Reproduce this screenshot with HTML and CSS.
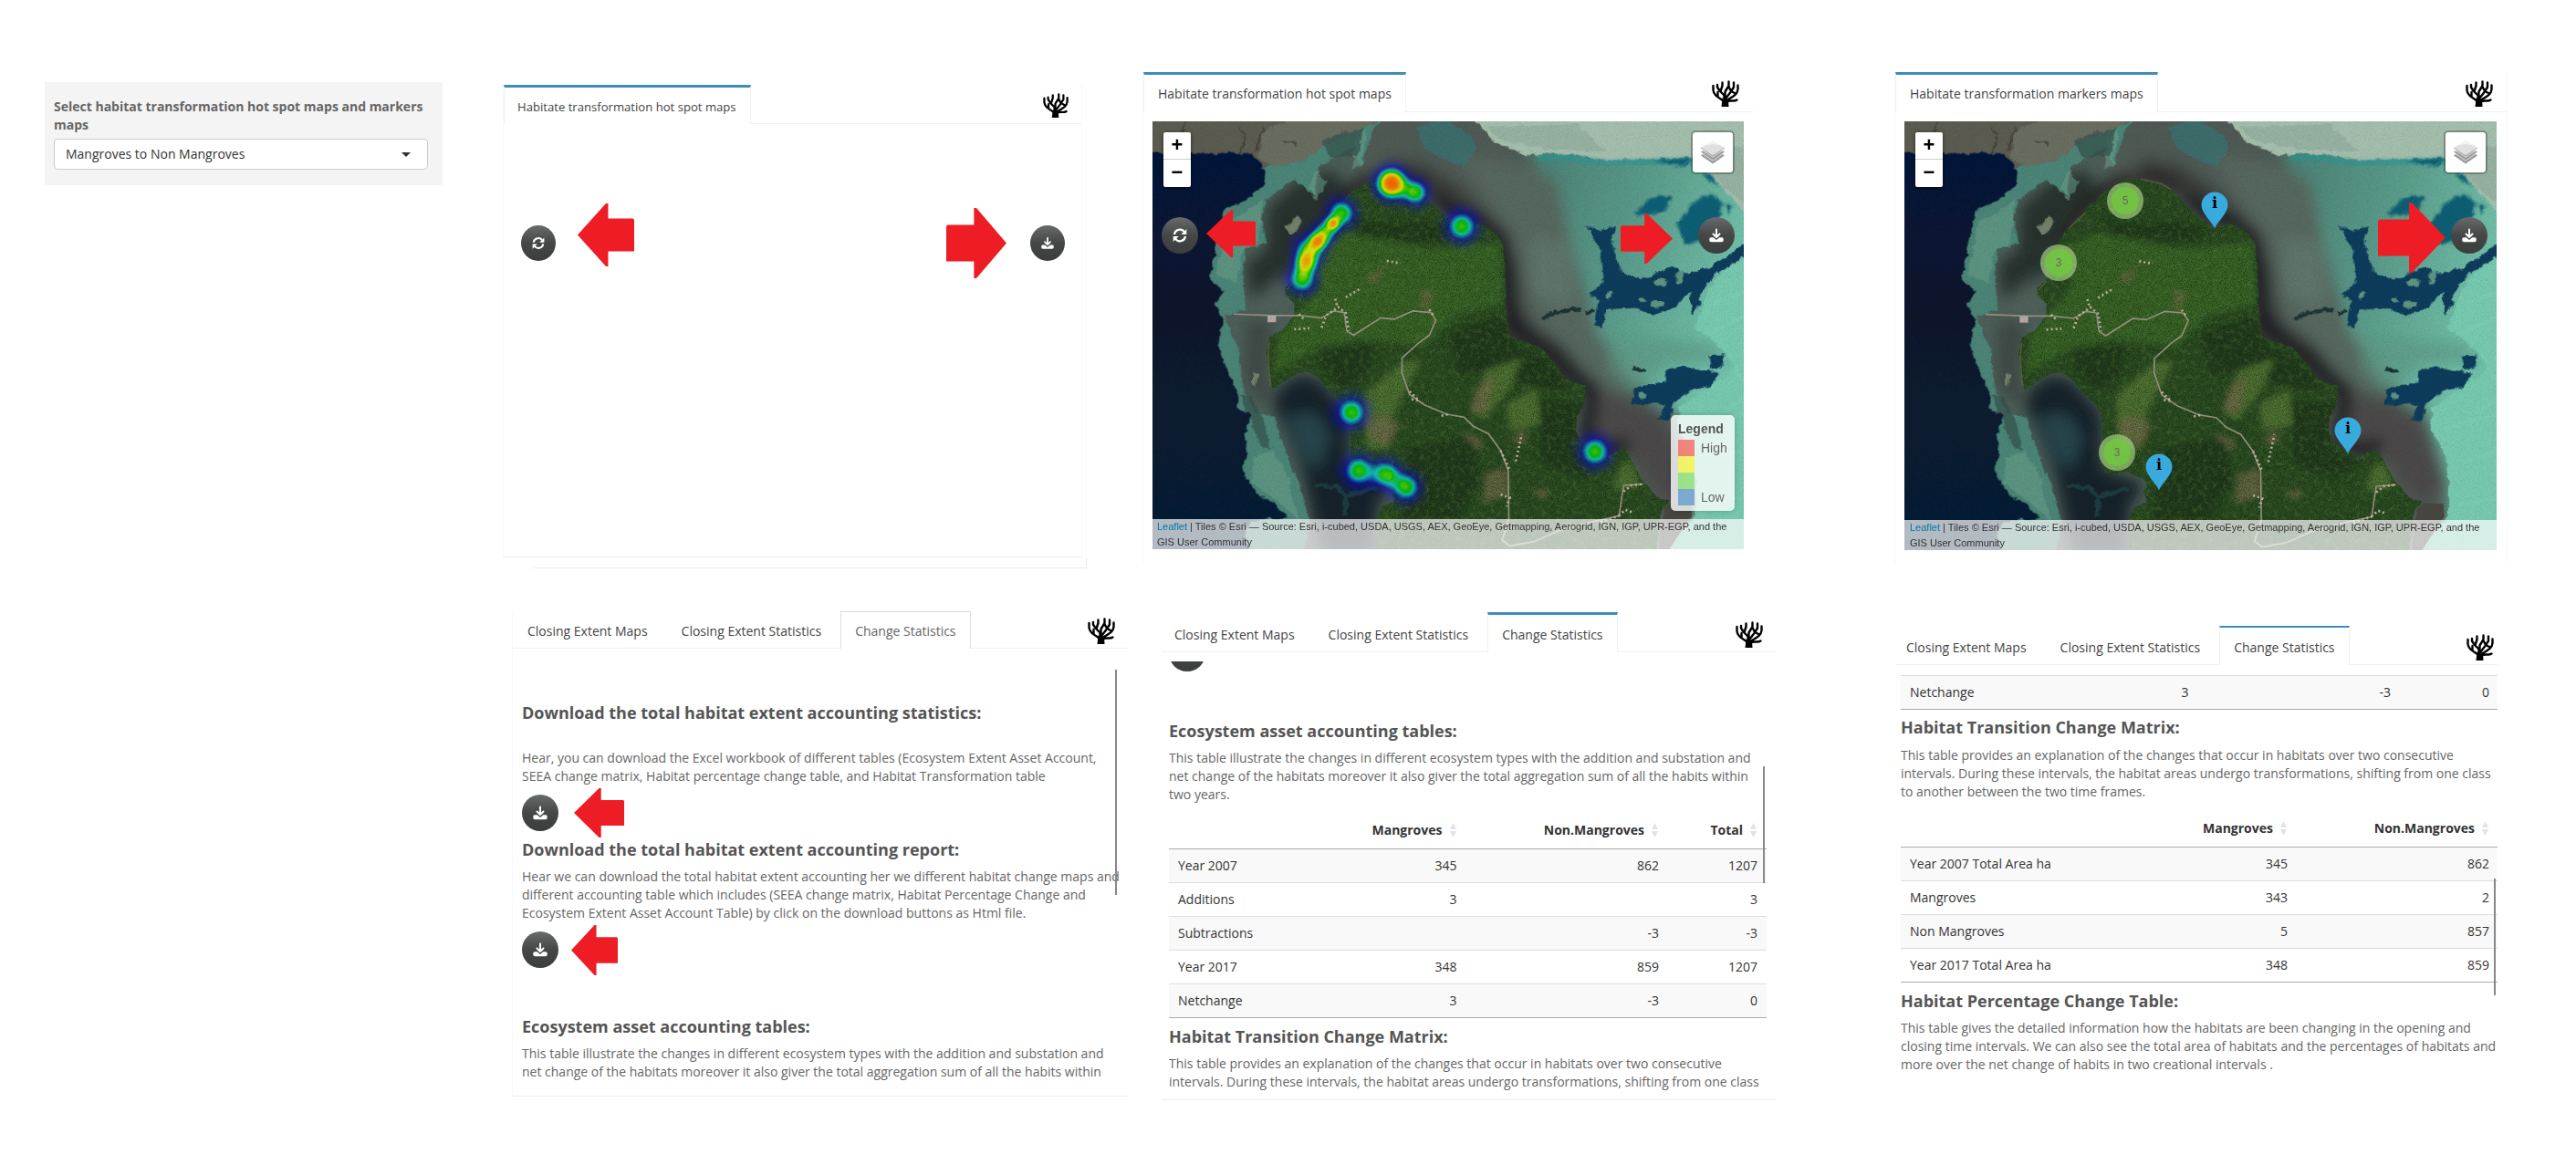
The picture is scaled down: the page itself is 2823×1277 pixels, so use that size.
FILE: index.html
```html
<!DOCTYPE html>
<html lang="en">
<head>
<meta charset="utf-8">
<title>Habitat extent accounting</title>
<link rel="stylesheet" href="styles.css">
</head>
<body>
<svg class="defs" width="0" height="0" aria-hidden="true">
  <defs>
    <filter id="rough" x="-5%" y="-5%" width="110%" height="110%">
      <feTurbulence type="fractalNoise" baseFrequency=".04" numOctaves="4" seed="4" result="n"/>
      <feDisplacementMap in="SourceGraphic" in2="n" scale="20" xChannelSelector="R" yChannelSelector="G"/>
      <feGaussianBlur stdDeviation=".7"/>
    </filter>
    <filter id="fray" x="-5%" y="-5%" width="110%" height="110%">
      <feTurbulence type="fractalNoise" baseFrequency=".04" numOctaves="4" seed="9" result="n"/>
      <feDisplacementMap in="SourceGraphic" in2="n" scale="10" xChannelSelector="R" yChannelSelector="G"/>
    </filter>
    <filter id="soft" x="-20%" y="-20%" width="140%" height="140%"><feGaussianBlur stdDeviation="9"/></filter>
    <filter id="softer" x="-20%" y="-20%" width="140%" height="140%"><feGaussianBlur stdDeviation="4"/></filter>
    <filter id="haze" x="-20%" y="-20%" width="140%" height="140%"><feGaussianBlur stdDeviation="24"/></filter>
    <filter id="grain" x="0" y="0" width="100%" height="100%" color-interpolation-filters="sRGB">
      <feTurbulence type="fractalNoise" baseFrequency=".35" numOctaves="4" seed="3"/>
      <feColorMatrix values="0 0 0 0 0  0 0 0 0 .02  0 0 0 0 0  2.4 0 0 0 -1.05"/>
    </filter>
    <filter id="patches" x="0" y="0" width="100%" height="100%" color-interpolation-filters="sRGB">
      <feTurbulence type="fractalNoise" baseFrequency=".06" numOctaves="5" seed="12"/>
      <feColorMatrix values="0 0 0 0 .34  0 0 0 0 .5  0 0 0 0 .22  0 3 0 0 -1.35"/>
    </filter>
    <filter id="heat" x="0" y="0" width="100%" height="100%" color-interpolation-filters="sRGB">
      <feColorMatrix values="0 0 0 1 0  0 0 0 1 0  0 0 0 1 0  0 0 0 1 0"/>
      <feComponentTransfer>
        <feFuncR type="table" tableValues="0 0 0 0 0 0 0 0 1 1 1"/>
        <feFuncG type="table" tableValues="0 0 0 0 0 .5 1 .9 1 .5 0"/>
        <feFuncB type="table" tableValues="1 1 1 1 1 1 1 0 0 0 0"/>
      </feComponentTransfer>
    </filter>
    <radialGradient id="pt">
      <stop offset="0" stop-opacity=".73"/><stop offset=".2" stop-opacity=".69"/>
      <stop offset=".4" stop-opacity=".5"/><stop offset=".6" stop-opacity=".26"/>
      <stop offset=".8" stop-opacity=".08"/><stop offset="1" stop-opacity="0"/>
    </radialGradient>
    <linearGradient id="lagoon" gradientUnits="userSpaceOnUse" x1="1240" y1="300" x2="1940" y2="500"><stop offset="0" stop-color="#4b8377"/><stop offset=".5" stop-color="#5b9c8b"/><stop offset="1" stop-color="#72c2ab"/></linearGradient>
    <linearGradient id="sea" x2="0" y2="1"><stop offset="0" stop-color="#06193a"/><stop offset=".4" stop-color="#08192c"/><stop offset="1" stop-color="#061c36"/></linearGradient>
    <path id="coast" d="M780 192L850 205 900 240 930 280 972 315 1022 350 1082 335 1122 360 1157 400 1164 480 1167 600 1177 705 1222 725 1282 745 1322 790 1347 830 1382 860 1432 870 1422 940 1402 970 1397 1020 1412 1050 1457 1090 1502 1105 1532 1082 1562 1080 1587 1130 1622 1190 1662 1235 1707 1250 1687 1275 1672 1310 1662 1420H740L745 1300 760 1270 800 1250 790 1225 800 1200 790 1175 740 1155 700 1165 665 1155 655 1120V1000L650 960 620 920 575 880 550 845 520 825 480 830 440 855 400 885 390 850 380 770 388 710 430 690 470 640 470 600 440 570 440 550 470 520 510 460 500 410 540 350 600 290 660 230 720 195Z"/>
    <clipPath id="land"><use href="#coast"/></clipPath>

    <symbol id="island" viewBox="3 0 1948 1410" preserveAspectRatio="none">
      <rect width="1960" height="1410" fill="#4e5f59"/>
      <g filter="url(#haze)">
        <path fill="#4f5a55" d="M690-20H1060L1230 110 1320 200 1400 400V600L1500 750 1620 930 1720 980 1790 1180 1780 1240 1700 1300 1660 1420H900L700 300Z"/>
        <path fill="url(#lagoon)" d="M1240 80L1350 60 1500 60 1780 60 2050 200V1480H1640L1800 1300 1800 1180 1730 960 1660 920 1560 820 1470 700 1430 560 1380 400 1310 250Z"/>
        <path fill="#56675f" d="M1250 150L1340 200 1380 400 1420 560 1470 700 1560 800 1540 900 1460 860 1380 760 1260 640 1200 400 1100 250 1000 100Z"/>
        <path fill="#64786f" opacity=".8" d="M1250 380L1370 400 1400 560 1360 620 1250 560Z"/>
        <path fill="#5c9884" opacity=".7" d="M1520 700L1860 730 1900 800 1700 800 1580 900 1500 800Z"/>
        <path fill="#4c4a48" d="M1440 880L1600 930 1700 990 1770 1200 1700 1260 1560 1080 1430 1060Z"/>
        <path fill="#383a39" d="M760 120L900 140 1020 220 1130 330 1210 600 1300 740 1420 830 1420 900 1150 800 1100 340 900 260Z"/>
        <path fill="none" stroke="#1f1d20" stroke-width="52" d="M930 250L1010 320 1090 330 1150 380 1180 500 1190 670 1330 760 1390 830 1450 880 1430 1050 1510 1090 1570 1060"/>
        <path fill="none" stroke="#241e1d" stroke-width="40" d="M500 420L600 285 700 195 800 180 900 220"/>
        <path fill="#16242a" d="M410 890L480 835 550 850 650 960V1140L790 1190 740 1280V1430H560L500 1160 450 1040 400 930Z"/>
        <path fill="#2c4d55" opacity=".8" d="M440 970L540 960 590 1040 550 1150 490 1100Z"/>
        <path fill="#3c4a45" d="M310 650L400 660 380 860 400 900 360 930 310 860Z"/>
        <path fill="#27332f" d="M380 290L480 200 600 160 640 220 540 320 470 500 430 560 330 590 310 470 380 420Z"/>
        <path fill="#56665f" opacity=".8" d="M400 530L450 500 430 580 360 620 330 600Z"/>
      </g>
      <g filter="url(#rough)">
        <path fill="#5b5c51" d="M-20-20H790L640 80 500 140 390 165 350 140 330 110H-20Z"/>
        <path fill="#777d6e" opacity=".55" d="M360 40L480-20H760L620 80 500 130 400 155 355 120Z"/>
        <path fill="none" stroke="#3b3a35" stroke-width="4" d="M110 0L85 90M290 20L310 60 285 110M370 20L340 100M430 60L480 75"/>
        <path fill="#4b8577" d="M330 160L500 130 600 60 770-10 730 30 690 150 670 80 600 120 550 150 540 250 470 190 380 260 360 320 380 400 310 420 300 500 310 620 240 640 290 760 300 880 340 960 400 970 430 1060 480 1180 520 1310 500 1430H280L180 500 200 300Z"/>
        <path fill="#6a9f8b" opacity=".55" d="M250 330L340 280 370 250 350 400 300 430 280 530 210 510 230 420ZM330 1110L400 1080 450 1170 490 1320 400 1240 330 1190ZM540 160L580 200 540 260 520 220ZM670 60L710 20 690 150 660 150Z"/>
        <path fill="#34504b" opacity=".7" d="M560 60L700 20 680 110 590 120ZM290 900L330 910 370 990 390 1080 360 1070 330 1000Z"/>
        <path fill="#77c9b0" d="M1970 420L1865 510 1815 600 1790 680 1860 730 1920 800 1890 840 1740 940 1730 1000 1780 1100 1795 1200 1790 1300 1690 1420H1970Z"/>
        <path fill="#a5bfae" d="M1050-20H1970V320L1880 215 1780 120 1500 128 1350 105 1240 110 1130 70Z"/>
        <path fill="#91ad9c" opacity=".7" d="M1100 20L1400 10 1500 100 1300 90 1150 60ZM1800 100L1960 80V280L1880 210Z"/>
        <path fill="#2d7b7b" opacity=".55" d="M870 20L960-10 1050 40 1070 90 1030 150 960 125 900 90Z"/>
      </g>
      <path filter="url(#softer)" fill="none" stroke="#2a9797" stroke-width="22" opacity=".6" d="M1270 120L1350 115 1500 140 1780 130"/>
      <path filter="url(#softer)" fill="none" stroke="#8ad8bf" stroke-width="10" opacity=".35" d="M1850 600L1960 560M1830 700L1960 640M1900 760L1970 900 1880 960M1780 1010L1960 960M1840 1120L1960 1080M1820 1260L1960 1240"/>
      <path filter="url(#rough)" fill="url(#sea)" d="M-40 105L330 105 375 165 370 210 310 260 240 290 225 350 210 430 190 520 240 560 210 600 235 650 220 740 250 820 285 900 280 950 330 960 305 1030 315 1090 300 1150 340 1220 400 1260 450 1305 330 1315 310 1350 320 1430H-40Z"/>
      <g filter="url(#rough)">
        <path fill="#0e5f75" filter="url(#softer)" d="M1587 310L1612 280 1672 240 1712 250 1690 300ZM1780 270L1842 235 1882 270 1872 310 1812 390 1760 410 1730 340ZM1650 130L1780 120 1750 150ZM1810 170L1850 180 1870 220ZM1890 270L1920 280 1900 305Z"/>
        <path fill="#0d3c5c" d="M1432 340L1472 360 1532 345 1517 380 1527 440 1552 500 1612 520 1712 480 1752 500 1772 500 1842 480 1965 395V440L1862 500 1812 560 1807 600 1782 640 1772 560 1732 610 1652 640 1592 615 1497 620 1487 680 1462 670 1472 590 1442 570 1487 530 1477 420ZM1582 930L1592 880 1692 855V820L1752 805 1872 830 1842 870 1772 890 1717 930 1712 985 1672 980 1692 930ZM1837 770L1892 768 1877 810 1847 820Z"/>
        <path fill="none" stroke="#1f3535" stroke-width="13" d="M1285 650L1330 628 1410 620M1430 630L1460 624M1590 815L1630 820"/>
        <path fill="none" stroke="#1d3b40" stroke-width="16" d="M540 1200L610 1205 640 1235 740 1205M640 1235V1300"/>
        <g fill="#609481"><ellipse cx="1507" cy="572" rx="11" ry="14"/><ellipse cx="1615" cy="587" rx="11" ry="9"/><ellipse cx="1677" cy="530" rx="23" ry="14"/><ellipse cx="1667" cy="602" rx="25" ry="13"/><ellipse cx="1740" cy="512" rx="13" ry="20"/><ellipse cx="1615" cy="904" rx="12" ry="13"/></g>
        <path fill="#73806a" d="M440 350L480 310 495 330 480 365 450 370ZM335 825L352 830 345 870 335 865Z"/>
      </g>
      <g filter="url(#fray)"><use href="#coast" fill="#2a4b21"/></g>
      <g clip-path="url(#land)">
        <g filter="url(#soft)">
          <path fill="#376325" d="M480 430L640 370 760 390 900 420 1150 400 1160 600 1000 640 900 740 700 720 560 740 400 830 420 700 560 540Z"/>
          <path fill="#203a1b" d="M560 760L700 730 740 760 700 850 640 890 560 820ZM980 700L1150 640 1200 740 1300 780 1380 880 1300 880 1100 830 1010 830ZM640 300L720 340 900 330 1000 350 960 400 700 380ZM840 1080L1060 1040 1080 1180 1020 1300 820 1330ZM1280 920L1420 930 1400 1080 1500 1120 1420 1180 1280 1120Z"/>
          <path fill="#4e6f33" d="M700 900L830 790 890 790 800 960 780 1080 710 1080 700 980ZM1100 820L1220 780 1180 880 1100 980 1050 960ZM1170 930L1270 880 1280 1000 1180 1020ZM1540 1140L1580 1120 1610 1200 1520 1220Z"/>
          <path fill="#746b4b" opacity=".75" d="M700 980L770 970 820 1000 780 1070 720 1040ZM1070 880L1130 840 1100 960 1050 950ZM890 560L930 560 900 640ZM700 520L770 480 740 530ZM1100 1160L1170 1140 1180 1230 1090 1260ZM1180 1060L1220 1010 1240 1060ZM1250 1220L1310 1210 1300 1250ZM1020 1020L1090 1050 1080 1090Z"/>
        </g>
        <rect width="1960" height="1410" filter="url(#patches)" opacity=".35"/>
        <rect width="1960" height="1410" filter="url(#grain)" opacity=".38"/>
      </g>
      <path fill="none" stroke="#72664f" stroke-width="4" opacity=".7" d="M780 190L850 205 880 225M545 350L600 300M388 730L384 780 392 870M445 555L470 525"/>
      <path fill="none" stroke="#96917f" stroke-width="5" stroke-linejoin="round" d="M270 635L400 640 490 640 560 648 600 625 635 630 643 690 665 705 755 648 800 652 860 625 920 630 937 655 915 705 880 730 825 780V830L850 900 900 935 972 965 1030 975 1060 1005 1110 1030 1150 1085 1175 1150 1177 1310 1155 1380 1180 1400 1260 1385 1340 1350 1450 1320 1540 1300 1555 1200 1620 1195"/>
      <path fill="none" stroke="#bcb2a0" stroke-width="8" stroke-dasharray="6 9" d="M560 680L575 640 615 612 640 632 650 690M605 585L612 612M640 580L690 550M775 460L820 468M485 635L500 650M470 685L520 682M915 620L932 645M850 890L880 920 850 915M955 970L980 965M1150 1085L1180 1150M1150 1230L1180 1240 1170 1270M1200 1120L1220 1030M1555 1220L1580 1200 1620 1195M1540 1300L1560 1280 1590 1290M1480 1320L1540 1300"/>
      <path fill="#b6aaa2" d="M382 640h28v22h-28z"/>
      <path fill="#494743" d="M1690 1275L1710 1255 1775 1258 1780 1300 1750 1340 1700 1420H1670Z"/>
      <rect width="1960" height="1410" filter="url(#grain)" opacity=".1"/>
    </symbol>

    <symbol id="coral" viewBox="0 0 30 29">
      <g fill="none" stroke="#000" stroke-linecap="round" stroke-linejoin="round" stroke-width="2.400">
        <path d="M1.500 6V11C2 16 6 18 12.500 22.500M6.500 13V18M6 5V7.500L8.500 11.500 13.500 16.500V23M11.500 2.500V6L9.500 12M18.500 1.500V6L14.500 12.500 14.500 22M24 2.500V7.500L20.500 13 15.500 19.500M20.500 11L18.500 7M28.500 5.500V10C28 15 25 17 17 21.500M26 14.500L23 13M27.500 21.500C24 24 21 21 16 23.500"/>
      </g>
      <path d="M11.500 19.500L15 20.500 18 20.500 18.500 29H10.500Z"/>
    </symbol>
    <symbol id="sync" viewBox="0 0 16 16">
      <path fill="none" stroke="#fff" stroke-width="2.300" d="M2 7A6 6 0 0 1 13 4.500M14 9A6 6 0 0 1 3 11.500"/>
      <path fill="#fff" d="M15.300 1V7H9.300ZM.7 15V9H6.700Z"/>
    </symbol>
    <symbol id="down" viewBox="0 0 16 16">
      <path fill="none" stroke="#fff" stroke-width="2" stroke-linecap="round" stroke-linejoin="round" d="M8 1.500V9M4.500 6.500L8 10 11.500 6.500"/>
      <path fill="#fff" d="M2 10.300H4.800L8 13 11.200 10.300H14A1.700 1.700 0 0 1 15.700 12V13.500A1.700 1.700 0 0 1 14 15.200H2A1.700 1.700 0 0 1 .3 13.500V12A1.700 1.700 0 0 1 2 10.300Z"/>
    </symbol>
    <symbol id="stack" viewBox="0 0 26 26">
      <path fill="#9b9b9b" d="M0 16.500L13 25.500 26 16.500 24 15 13 22.500 2 15Z"/><path fill="#c9c9c9" d="M3 15.500L13 9 23 15.500 13 22.300Z"/>
      <path fill="#9b9b9b" d="M0 12.500L13 21.500 26 12.500 24 11.200 13 18.800 2 11.200Z"/><path fill="#d5d5d5" d="M3 11.800L13 5 23 11.800 13 18.700Z"/>
      <path fill="#8f8f8f" d="M0 8.600L13 17.400 26 8.600V7.700H0Z"/><path fill="#e0e0e0" d="M0 8L13 .3 26 8 13 16.500Z"/><path fill="#f3f3f3" d="M4 5.700L13 .3 22 5.700 13 3.800Z"/>
    </symbol>
    <symbol id="sort" viewBox="0 0 7 16"><path fill="#e3e3e3" d="M3.500 0L7 7H0ZM0 9H7L3.500 16Z"/></symbol>
    <symbol id="pin" viewBox="0 0 30 41">
      <path fill="#38aadd" d="M15 40.500C13 34 .5 24 .5 15A14.500 14.500 0 0 1 29.500 15C29.500 24 17 34 15 40.500Z"/>
    </symbol>
    <symbol id="arrow" viewBox="0 0 100 100" preserveAspectRatio="none"><path fill="#ee1c25" d="M0 50L50 0H54V24H98L100 26V76H54V100H50Z"/></symbol>
  </defs>
</svg>

<main class="board">
  <form class="filter">
    <label class="filter-label">Select habitat transformation hot spot maps and markers maps</label>
    <div class="select"><span>Mangroves to Non Mangroves</span><i class="caret"></i></div>
  </form>

  <section class="card blank">
    <header class="tabs"><span class="tab active">Habitate transformation hot spot maps</span><svg class="coral"><use href="#coral"/></svg></header>
    <div class="blank-body">
      <button class="round"><svg><use href="#sync"/></svg></button>
      <button class="round"><svg><use href="#down"/></svg></button>
    </div>
    <div class="outer-edge"></div>
    <svg class="arrow a1"><use href="#arrow"/></svg>
    <svg class="arrow right a2"><use href="#arrow"/></svg>
  </section>

  <section class="card map-card hot">
    <header class="tabs"><span class="tab active">Habitate transformation hot spot maps</span><svg class="coral"><use href="#coral"/></svg></header>
    <div class="map">
      <svg class="layer"><use href="#island"/></svg>
      <svg class="layer" viewBox="0 0 648 469" preserveAspectRatio="none">
        <g filter="url(#heat)" fill="url(#pt)">
          <rect width="648" height="469" fill="none"/>
          <circle cx="262" cy="68" r="31"/><circle cx="262" cy="68" r="27"/><circle cx="288" cy="78" r="26"/>
          <circle cx="339" cy="115" r="30"/>
          <circle cx="207" cy="101" r="28"/><circle cx="198" cy="112" r="14"/><circle cx="189" cy="122" r="23"/><circle cx="181" cy="132" r="17"/><circle cx="172" cy="141" r="29"/><circle cx="168" cy="155" r="22"/><circle cx="164" cy="173" r="28"/>
          <circle cx="218" cy="319" r="30"/><circle cx="485" cy="362" r="30"/>
          <circle cx="226" cy="383" r="30"/><circle cx="256" cy="387" r="28"/><circle cx="278" cy="401" r="28"/>
        </g>
      </svg>
      <div class="zoomer"><b>+</b><b>−</b></div>
      <div class="layers"><svg><use href="#stack"/></svg></div>
      <button class="round on-map at-left"><svg><use href="#sync"/></svg></button>
      <button class="round on-map at-right"><svg><use href="#down"/></svg></button>
      <div class="legend">
        <strong>Legend</strong>
        <div class="legend-body">
          <div class="swatches"><i class="s1"></i><i class="s2"></i><i class="s3"></i><i class="s4"></i></div>
          <div class="legend-text"><span>High</span><span>Low</span></div>
        </div>
      </div>
      <p class="credits"><a>Leaflet</a> | Tiles © Esri — Source: Esri, i-cubed, USDA, USGS, AEX, GeoEye, Getmapping, Aerogrid, IGN, IGP, UPR-EGP, and the<br>GIS User Community</p>
    </div>
    <svg class="arrow a3"><use href="#arrow"/></svg>
    <svg class="arrow right a4"><use href="#arrow"/></svg>
  </section>

  <section class="card map-card marks">
    <header class="tabs"><span class="tab active">Habitate transformation markers maps</span><svg class="coral"><use href="#coral"/></svg></header>
    <div class="map">
      <svg class="layer"><use href="#island"/></svg>
      <div class="zoomer"><b>+</b><b>−</b></div>
      <div class="layers"><svg><use href="#stack"/></svg></div>
      <button class="round on-map at-right"><svg><use href="#down"/></svg></button>
      <div class="cluster c1"><span>5</span></div>
      <div class="cluster c2"><span>3</span></div>
      <div class="cluster c3"><span>3</span></div>
      <div class="pin p1"><svg><use href="#pin"/></svg><span>i</span></div>
      <div class="pin p2"><svg><use href="#pin"/></svg><span>i</span></div>
      <div class="pin p3"><svg><use href="#pin"/></svg><span>i</span></div>
      <p class="credits"><a>Leaflet</a> | Tiles © Esri — Source: Esri, i-cubed, USDA, USGS, AEX, GeoEye, Getmapping, Aerogrid, IGN, IGP, UPR-EGP, and the<br>GIS User Community</p>
    </div>
    <svg class="arrow right a5"><use href="#arrow"/></svg>
  </section>

  <section class="card stats downloads">
    <header class="tabs"><span class="tab">Closing Extent Maps</span><span class="tab">Closing Extent Statistics</span><span class="tab active">Change Statistics</span><svg class="coral"><use href="#coral"/></svg></header>
    <div class="body">
      <h4>Download the total habitat extent accounting statistics:</h4>
      <p class="lead">Hear, you can download the Excel workbook of different tables (Ecosystem Extent Asset Account,<br>SEEA change matrix, Habitat percentage change table, and Habitat Transformation table</p>
      <button class="round"><svg><use href="#down"/></svg></button>
      <h4>Download the total habitat extent accounting report:</h4>
      <p>Hear we can download the total habitat extent accounting her we different habitat change maps and<br>different accounting table which includes (SEEA change matrix, Habitat Percentage Change and<br>Ecosystem Extent Asset Account Table) by click on the download buttons as Html file.</p>
      <button class="round"><svg><use href="#down"/></svg></button>
      <h4 class="spaced">Ecosystem asset accounting tables:</h4>
      <p>This table illustrate the changes in different ecosystem types with the addition and substation and<br>net change of the habitats moreover it also giver the total aggregation sum of all the habits within</p>
    </div>
    <i class="scroll"></i>
    <svg class="arrow a6"><use href="#arrow"/></svg>
    <svg class="arrow a7"><use href="#arrow"/></svg>
  </section>

  <section class="card stats assets">
    <header class="tabs"><span class="tab">Closing Extent Maps</span><span class="tab">Closing Extent Statistics</span><span class="tab active">Change Statistics</span><svg class="coral"><use href="#coral"/></svg></header>
    <div class="body">
      <button class="round"></button>
      <h4 class="spaced">Ecosystem asset accounting tables:</h4>
      <p>This table illustrate the changes in different ecosystem types with the addition and substation and<br>net change of the habitats moreover it also giver the total aggregation sum of all the habits within<br>two years.</p>
      <table>
        <colgroup><col class="w1"><col class="w2"><col class="w3"><col class="w4"></colgroup>
        <thead><tr><th></th><th>Mangroves<svg><use href="#sort"/></svg></th><th>Non.Mangroves<svg><use href="#sort"/></svg></th><th>Total<svg><use href="#sort"/></svg></th></tr></thead>
        <tbody>
          <tr><td>Year 2007</td><td>345</td><td>862</td><td>1207</td></tr>
          <tr><td>Additions</td><td>3</td><td></td><td>3</td></tr>
          <tr><td>Subtractions</td><td></td><td>-3</td><td>-3</td></tr>
          <tr><td>Year 2017</td><td>348</td><td>859</td><td>1207</td></tr>
          <tr><td>Netchange</td><td>3</td><td>-3</td><td>0</td></tr>
        </tbody>
      </table>
      <h4>Habitat Transition Change Matrix:</h4>
      <p>This table provides an explanation of the changes that occur in habitats over two consecutive<br>intervals. During these intervals, the habitat areas undergo transformations, shifting from one class</p>
    </div>
    <i class="scroll"></i>
  </section>

  <section class="card stats matrix">
    <header class="tabs"><span class="tab">Closing Extent Maps</span><span class="tab">Closing Extent Statistics</span><span class="tab active">Change Statistics</span><svg class="coral"><use href="#coral"/></svg></header>
    <div class="body">
      <table class="tail">
        <colgroup><col class="w1"><col class="w2"><col class="w3"><col class="w4"></colgroup>
        <tbody><tr><td>Netchange</td><td>3</td><td>-3</td><td>0</td></tr></tbody>
      </table>
      <h4>Habitat Transition Change Matrix:</h4>
      <p>This table provides an explanation of the changes that occur in habitats over two consecutive<br>intervals. During these intervals, the habitat areas undergo transformations, shifting from one class<br>to another between the two time frames.</p>
      <table>
        <colgroup><col class="v1"><col class="v2"><col class="v3"></colgroup>
        <thead><tr><th></th><th>Mangroves<svg><use href="#sort"/></svg></th><th>Non.Mangroves<svg><use href="#sort"/></svg></th></tr></thead>
        <tbody>
          <tr><td>Year 2007 Total Area ha</td><td>345</td><td>862</td></tr>
          <tr><td>Mangroves</td><td>343</td><td>2</td></tr>
          <tr><td>Non Mangroves</td><td>5</td><td>857</td></tr>
          <tr><td>Year 2017 Total Area ha</td><td>348</td><td>859</td></tr>
        </tbody>
      </table>
      <h4>Habitat Percentage Change Table:</h4>
      <p>This table gives the detailed information how the habitats are been changing in the opening and<br>closing time intervals. We can also see the total area of habitats and the percentages of habitats and<br>more over the net change of habits in two creational intervals .</p>
    </div>
    <i class="scroll"></i>
  </section>
</main>
</body>
</html>
```
FILE: styles.css
```css
* { box-sizing: border-box; }
body {
  margin: 0;
  background: #fff;
  color: #666;
  font: 14px/20px "Open Sans", sans-serif;
}
.defs { position: absolute; }
h4, p { margin: 0; white-space: nowrap; }
svg { display: block; }

.board {
  display: grid;
  grid-template-columns: 552px 701px 824px 746px;
  grid-template-rows: 640px 637px;
  width: 2823px;
  height: 1277px;
  overflow: hidden;
}

/* select box */
.filter {
  width: 436px;
  height: 113px;
  margin: 90px 0 0 49px;
  padding: 17px 16px 0 10px;
  background: #f4f4f4;
}
.filter-label { display: block; font-weight: 700; color: #666; margin-bottom: 5px; }
.select {
  display: flex;
  align-items: center;
  justify-content: space-between;
  height: 34px;
  padding: 0 18px 0 12px;
  border: 1px solid #ccc;
  border-radius: 4px;
  background: #fff;
  color: #333;
}
.caret { border: 5px solid transparent; border-top-color: #333; border-bottom: 0; }

/* cards and tabs */
.card { position: relative; display: flex; flex-direction: column; border-left: 1px solid #f8f8f8; }
.tabs {
  display: flex;
  gap: 5px;
  flex: none;
  height: 44px;
  border-bottom: 1px solid #f0f0f0;
  color: #444;
}
.tab {
  flex: none;
  height: 100%;
  padding: 14px 15px 0;
  border: 1px solid transparent;
  border-top: 0;
  white-space: nowrap;
}
.tab.active {
  height: calc(100% + 1px);
  padding-top: 11px;
  background: #fff;
  border-color: #f0f0f0;
  border-top: 3px solid #3c8dbc;
  border-bottom: 0;
}
.coral { width: 30px; height: 29px; margin: 9px 15px 0 auto; }

.round {
  display: flex;
  align-items: center;
  justify-content: center;
  flex: none;
  width: 40px;
  height: 40px;
  padding: 0;
  border: 0;
  border-radius: 50%;
  background: linear-gradient(#686b6b, #454747 50%, #3c3d3d);
}
.round svg { width: 16px; height: 16px; }
.arrow { position: absolute; }
.arrow.right { transform: scaleX(-1); }

/* empty card */
.blank { width: 635px; height: 518px; margin-top: 93px; margin-left: -1px; border-right: 1px solid #f8f8f8; border-bottom: 1px solid #eee; }
.blank .tabs { height: 43px; font-size: 13.12px; }
.blank .tab { padding-left: 14px; padding-right: 15px; }
.blank .coral { width: 28px; height: 29px; margin-right: 14px; margin-top: 8px; }
.blank-body { display: flex; justify-content: space-between; margin-top: 111px; padding: 0 18px 0 19px; }
.blank .round { width: 38px; height: 39px; }
.blank .round svg { width: 14px; height: 15px; }
.outer-edge { position: absolute; left: 33px; top: 518px; width: 606px; height: 12px; border: 1px solid #ececec; border-width: 0 1px 1px 0; }
.a1 { left: 81px; top: 130px; width: 62px; height: 69px; }
.a2 { left: 485px; top: 135px; width: 66px; height: 77px; }

/* map cards */
.map-card { margin-top: 79px; margin-left: -1px; width: 669px; height: 541px; }
.marks { width: 672px; border-right: 1px solid #f8f8f8; }
.map { position: relative; width: 648px; height: 469px; margin: 10px 0 0 10px; overflow: hidden; font-family: "Liberation Sans", Arial, sans-serif; }
.marks .map { width: 649px; height: 470px; }
.layer { position: absolute; inset: 0; width: 100%; height: 100%; }
.zoomer {
  position: absolute; left: 12px; top: 12px; width: 30px; height: 60px;
  background: #fff; border-radius: 2px; box-shadow: 0 1px 4px rgba(0,0,0,.6);
  color: #000; font-size: 22px; line-height: 28px; text-align: center;
}
.zoomer b { display: block; height: 29px; }
.zoomer b + b { border-top: 1px solid #ccc; }
.layers {
  position: absolute; right: 10px; top: 10px; width: 48px; height: 48px; padding: 9px;
  background: #fff; background-clip: padding-box; border: 2px solid rgba(0,0,0,.25); border-radius: 5px;
}
.layers svg { width: 26px; height: 26px; }
.on-map { position: absolute; top: 105px; }
.at-left { left: 10px; }
.at-right { right: 10px; }
.legend {
  position: absolute; right: 10px; top: 322px; width: 70px; height: 105px; padding: 6px 8px;
  border-radius: 5px; background: rgba(255,255,255,.8); box-shadow: 0 0 6px rgba(0,0,0,.2);
  color: #666; font-size: 14px; line-height: 18px;
}
.legend strong { display: block; line-height: 19px; color: #555; margin-bottom: 2px; }
.legend-body { display: flex; gap: 7px; }
.swatches { width: 18px; opacity: .9; }
.swatches i { display: block; height: 18px; }
.s1 { background: #f27a70; } .s2 { background: #f6f45c; } .s3 { background: #94e480; } .s4 { background: #72a4cf; }
.legend-text { display: flex; flex-direction: column; justify-content: space-between; height: 72px; }
.credits {
  position: absolute; left: 0; right: 0; bottom: 0; height: 33px; padding-left: 5px;
  background: rgba(255,255,255,.7); color: #333; font-size: 11px; line-height: 16.8px;
}
.marks .credits { padding-left: 6px; }
.credits a { color: #0078a8; }
.a3 { left: 69px; top: 151px; width: 54px; height: 52px; }
.a4 { left: 523px; top: 155px; width: 57px; height: 55px; }
.a5 { left: 529px; top: 143px; width: 74px; height: 77px; }
.cluster {
  position: absolute; width: 40px; height: 40px; padding: 5px; border-radius: 50%;
  background: rgba(181,226,140,.6);
}
.cluster span {
  display: block; width: 30px; height: 30px; border-radius: 50%; background: rgba(110,204,57,.75);
  color: #666; font-size: 12px; line-height: 30px; text-align: center;
}
.c1 { left: 222px; top: 67px; } .c2 { left: 149px; top: 135px; } .c3 { left: 213px; top: 343px; }
.pin { position: absolute; width: 30px; height: 41px; }
.pin svg { position: absolute; width: 30px; height: 41px; }
.pin span { position: relative; display: block; color: #000; font: 700 16px/26px "DejaVu Serif", serif; text-align: center; }
.p1 { left: 325px; top: 77px; } .p2 { left: 471px; top: 324px; } .p3 { left: 264px; top: 364px; }

/* statistics cards */
.body { padding-left: var(--pad); white-space: nowrap; }
.body h4 { font-size: 18px; line-height: 20px; font-weight: 700; color: #555; }
.body p { margin-top: 10px; }
.scroll { position: absolute; width: 2px; background: #888; }

.downloads { --pad: 10px; grid-column: 2; margin: 30px 0 0 9px; width: 675px; height: 532px; border-bottom: 1px solid #eee; }
.downloads .tabs { height: 41px; }
.downloads .tab { padding-top: 12px; }
.downloads .tab.active { padding-top: 11px; border: 1px solid #ddd; border-bottom: 0; color: #666; }
.downloads .coral { margin-top: 7px; margin-right: 14px; }
.downloads h4 { margin-top: 10px; }
.downloads h4:first-child { margin-top: 60px; }
.downloads .lead { margin-top: 30px; }
.downloads .round { margin-top: 10px; }
.downloads .spaced { margin-top: 54px; }
.downloads .scroll { left: 660px; top: 64px; height: 247px; }
.a6 { left: 67px; top: 194px; width: 55px; height: 54px; }
.a7 { left: 64px; top: 344px; width: 51px; height: 55px; }

.assets { --pad: 8px; margin: 31px 0 0 20px; width: 674px; height: 535px; border-left: 0; border-bottom: 1px solid #eee; }
.assets .tabs { height: 44px; }
.assets .tab { padding-top: 15px; }
.assets .tab.active { padding-top: 12px; }
.assets .tab:first-child { margin-left: -2px; }
.assets .coral { margin-top: 10px; }
.assets .body { margin-top: 10px; overflow: hidden; flex: 1; }
.assets .round { margin-top: -29px; }
.assets .spaced { margin-top: 55px; }
.assets .scroll { left: 659px; top: 169px; height: 128px; }

.matrix { --pad: 6px; margin-top: 46px; width: 660px; height: 540px; border-left: 0; }
.matrix .tabs { height: 43px; }
.matrix .tab:first-child { margin-left: -4px; }
.matrix .tab { padding-top: 14px; }
.matrix .tab.active { padding-top: 12px; border-top-width: 2px; }
.matrix .coral { margin: 9px 4px 0 auto; }
.matrix .body { margin-top: 11px; overflow: hidden; }
.matrix .scroll { left: 656px; top: 277px; height: 128px; }

table { width: 655px; margin-top: 9px; border-collapse: separate; border-spacing: 0; table-layout: fixed; color: #333; border-bottom: 1px solid #aaa; }
.w1 { width: 200px; } .w2 { width: 125.5px; } .w3 { width: 221.5px; } .w4 { width: 108px; }
.v1 { width: 234px; } .v2 { width: 200px; } .v3 { width: 221px; }
th { height: 41px; padding: 0 11px 0 0; border-bottom: 1px solid #aaa; text-align: right; font-weight: 700; }
th svg { display: inline-block; width: 7px; height: 16px; margin-left: 8px; vertical-align: -3px; }
td { height: 37px; padding: 0 10px; border-top: 1px solid #ddd; text-align: right; }
td:first-child { text-align: left; }
thead + tbody tr:first-child td { height: 36px; border-top: 0; }
tbody tr:nth-child(odd) { background: #f9f9f9; }
table + h4 { margin-top: 10px; }
.matrix .tail { margin-top: 0; }
.matrix .tail + h4 { margin-top: 9px; }
.matrix .tail + h4 + p { margin-top: 11px; }
.matrix p + table { margin-top: 10px; }
```
